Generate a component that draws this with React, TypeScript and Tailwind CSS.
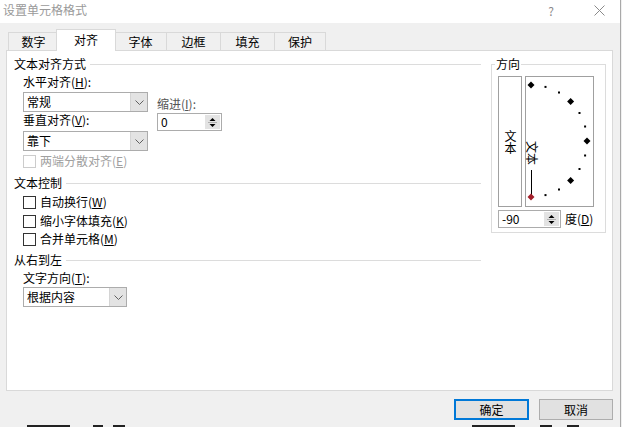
import React from "react";

const Chevron = () => (
  <svg width="9" height="5" viewBox="0 0 9 5">
    <path d="M0.5 0.5 L4.5 4.5 L8.5 0.5" fill="none" stroke="#606060" strokeWidth="1" />
  </svg>
);

const SpinArrows = () => (
  <svg width="9" height="13" viewBox="0 0 9 13">
    <path d="M4.5 2 L7.5 5 L1.5 5 Z" fill="#000" />
    <line x1="0" y1="6.5" x2="9" y2="6.5" stroke="#b0b0b0" strokeWidth="1" />
    <path d="M1.5 8 L7.5 8 L4.5 11 Z" fill="#000" />
  </svg>
);

function Combo({ text, cls }: { text: string; cls: string }) {
  return (
    <div className={`flex h-[20px] border border-[#acacac] bg-white ${cls}`}>
      <div className="flex-1 pl-[3px] leading-[18px]">{text}</div>
      <div className="w-[17px] bg-[#e3e3e3] border-l border-[#d4d4d4] flex items-center justify-center">
        <Chevron />
      </div>
    </div>
  );
}

function Spinner({ text, cls }: { text: string; cls: string }) {
  return (
    <div className={`flex h-[18px] border border-[#acacac] bg-white ${cls}`}>
      <div className="flex-1 pl-[3px] leading-[16px]">{text}</div>
      <div className="w-[15px] my-[1px] mr-[1px] bg-[#e3e3e3] flex items-center justify-center">
        <SpinArrows />
      </div>
    </div>
  );
}

function Check({ label, k, disabled }: { label: string; k: string; disabled?: boolean }) {
  return (
    <div className="flex items-center h-[16px]">
      <div
        className={`w-[13px] h-[13px] border bg-white ${disabled ? "border-[#cccccc]" : "border-[#333333]"}`}
      />
      <span className={`ml-[4px] leading-[16px] ${disabled ? "text-[#a0a0a0]" : "text-black"}`}>
        {label}(<span className="underline">{k}</span>)
      </span>
    </div>
  );
}

function Heading({ text, cls }: { text: string; cls: string }) {
  return (
    <div className={`flex items-center h-[16px] ${cls}`}>
      <span className="leading-[16px]">{text}</span>
      <div className="flex-1 h-px bg-[#dcdcdc] ml-[4px] mt-[1px]" />
    </div>
  );
}

function Dial() {
  const cx = 5;
  const cy = 64;
  const r = 56;
  const items: React.ReactNode[] = [];
  for (let a = 90; a >= -90; a -= 15) {
    const rad = (a * Math.PI) / 180;
    const x = cx + r * Math.cos(rad);
    const y = cy - r * Math.sin(rad);
    if (a % 45 === 0) {
      const col = a === -90 ? "#a3202c" : "#000";
      items.push(
        <polygon
          key={a}
          points={`${x},${y - 3.5} ${x + 3.5},${y} ${x},${y + 3.5} ${x - 3.5},${y}`}
          fill={col}
        />
      );
    } else {
      items.push(<rect key={a} x={x - 1} y={y - 1} width="2" height="2" fill="#000" />);
    }
  }
  return (
    <svg width="67" height="129" viewBox="0 0 67 129" className="overflow-visible">
      <line x1="5.5" y1="93" x2="5.5" y2="118" stroke="#000" strokeWidth="1" />
      <text
        x="6"
        y="76"
        fontSize="12"
        textAnchor="middle"
        dominantBaseline="central"
        fontFamily="'Noto Sans CJK SC', sans-serif"
        transform="rotate(90 6 76)"
        fill="#000"
      >
        文本
      </text>
      {items}
    </svg>
  );
}

export default function App() {
  const tabs = [
    { t: "数字", w: "w-[50px]" },
    { t: "对齐", w: "w-[60px]", sel: true },
    { t: "字体", w: "w-[52px]" },
    { t: "边框", w: "w-[54px]" },
    { t: "填充", w: "w-[54px]" },
    { t: "保护", w: "w-[52px]" },
  ];
  return (
    <div className="flex w-[622px] h-[427px] bg-[#f0f0f0] overflow-hidden text-[12px] leading-[16px] text-black font-['Noto_Sans_CJK_SC','Microsoft_YaHei',sans-serif]">
      <div className="w-[620px] flex flex-col">
        {/* title bar */}
        <div className="h-[23px] bg-white flex items-center shrink-0">
          <span className="pl-[3px] text-[#9a9a9a] leading-[16px] -mt-[3px]">设置单元格格式</span>
          <div className="flex-1" />
          <span className="text-[#8a8a8a] leading-[16px] mr-[40px] -mt-[1px]">?</span>
          <svg width="11" height="11" viewBox="0 0 11 11" className="mr-[15px] -mt-[3px]">
            <path d="M0.5 0.5 L10.5 10.5 M10.5 0.5 L0.5 10.5" stroke="#8a8a8a" strokeWidth="1" />
          </svg>
        </div>
        {/* tabs */}
        <div className="h-[27px] flex items-end pl-[8px] shrink-0">
          {tabs.map((tb, i) =>
            tb.sel ? (
              <div
                key={i}
                className={`${tb.w} h-[22px] -mx-[2px] -mb-px relative z-10 bg-white border border-b-0 border-[#d9d9d9] flex items-center justify-center`}
              >
                <span className="leading-[16px] -mt-[2px]">{tb.t}</span>
              </div>
            ) : (
              <div
                key={i}
                className={`${tb.w} h-[18px] border-t border-l border-[#d9d9d9] flex items-center justify-center ${i === tabs.length - 1 ? "border-r" : ""}`}
              >
                <span className="leading-[16px]">{tb.t}</span>
              </div>
            )
          )}
        </div>
        {/* panel */}
        <div className="ml-[6px] w-[607px] h-[341px] border border-[#d9d9d9] bg-white flex shrink-0">
          {/* left column */}
          <div className="w-[467px] ml-[7px] pt-[5px] flex flex-col">
            <Heading text="文本对齐方式" cls="" />
            <div className="flex pl-[9px] mt-[2px]">
              <div className="flex flex-col">
                <div className="h-[16px] leading-[16px]">
                  水平对齐(<span className="underline">H</span>):
                </div>
                <Combo text="常规" cls="w-[125px] mt-[2px]" />
                <div className="h-[16px] leading-[16px]">
                  垂直对齐(<span className="underline">V</span>):
                </div>
                <Combo text="靠下" cls="w-[125px] mt-[3px]" />
              </div>
              <div className="flex flex-col ml-[9px] pt-[22px]">
                <div className="h-[16px] leading-[16px] text-[#555]">
                  缩进(<span className="underline">I</span>):
                </div>
                <Spinner text="0" cls="w-[65px] mt-[1px]" />
              </div>
            </div>
            <div className="pl-[9px] mt-[2px]">
              <Check label="两端分散对齐" k="E" disabled />
            </div>
            <Heading text="文本控制" cls="mt-[6px]" />
            <div className="pl-[9px] flex flex-col">
              <div className="mt-[3px]">
                <Check label="自动换行" k="W" />
              </div>
              <div className="mt-[3px]">
                <Check label="缩小字体填充" k="K" />
              </div>
              <div className="mt-[2px]">
                <Check label="合并单元格" k="M" />
              </div>
            </div>
            <Heading text="从右到左" cls="mt-[5px]" />
            <div className="pl-[9px] flex flex-col">
              <div className="h-[16px] leading-[16px] mt-[2px]">
                文字方向(<span className="underline">T</span>):
              </div>
              <Combo text="根据内容" cls="w-[104px] mt-[1px]" />
            </div>
          </div>
          {/* right group */}
          <div className="ml-[10px] mt-[13px] w-[115px] h-[169px] border border-[#dcdcdc] relative self-start">
            <span className="absolute left-[3px] -top-[9px] bg-white px-[1px] leading-[16px]">方向</span>
            <div className="pl-[6px] pt-[11px] flex flex-col">
              <div className="flex">
                <div className="w-[24px] h-[131px] border border-[#a0a0a0] flex items-center justify-center">
                  <span className="leading-[12px] [writing-mode:vertical-rl] [text-orientation:upright]">文本</span>
                </div>
                <div className="ml-[3px] w-[69px] h-[131px] border border-[#a0a0a0]">
                  <Dial />
                </div>
              </div>
              <div className="flex items-center mt-[3px]">
                <Spinner text="-90" cls="w-[63px]" />
                <span className="ml-[4px] leading-[16px]">
                  度(<span className="underline">D</span>)
                </span>
              </div>
            </div>
          </div>
        </div>
        {/* buttons */}
        <div className="flex justify-end pr-[7px] mt-[8px] shrink-0">
          <div className="w-[75px] h-[21px] border-2 border-[#0078d7] bg-[#e1e1e1] flex items-center justify-center">
            <span className="leading-[16px]">确定</span>
          </div>
          <div className="ml-[10px] w-[74px] h-[21px] border border-[#adadad] bg-[#e1e1e1] flex items-center justify-center">
            <span className="leading-[16px]">取消</span>
          </div>
        </div>
        <div className="flex mt-[5px] h-[2px] shrink-0">
          <div className="ml-[27px] w-[43px] bg-[#222]" />
          <div className="ml-[23px] w-[10px] bg-[#222]" />
          <div className="ml-[10px] w-[12px] bg-[#222]" />
          <div className="ml-[347px] w-[43px] bg-[#222]" />
          <div className="ml-[25px] w-[12px] bg-[#222]" />
          <div className="ml-[15px] w-[12px] bg-[#222]" />
        </div>
      </div>
      <div className="w-px bg-[#a9a9a9]" />
      <div className="w-px bg-[#f0f0f0]" />
    </div>
  );
}
